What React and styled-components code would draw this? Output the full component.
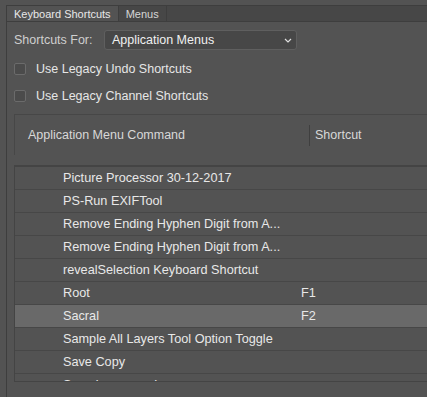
import React from "react";
import styled, { createGlobalStyle } from "styled-components";

const Global = createGlobalStyle`
  html, body { margin: 0; padding: 0; background: #535353; overflow: hidden; }
  body { font-family: "Liberation Sans", Arial, sans-serif; color: #e2e2e2; }
`;

const Page = styled.div`
  width: 427px;
  height: 397px;
  padding: 5px 0 0 6px;
  box-sizing: border-box;
  overflow: hidden;
`;

const Panel = styled.div`
  border-left: 1px solid #3e3e3e;
  border-top: 1px solid #3e3e3e;
  height: 392px;
  box-sizing: border-box;
  width: 440px;
`;

const TabBar = styled.div`
  display: flex;
  height: 15px;
  background: #474747;
  border-bottom: 1px solid #3e3e3e;
`;

const Tab = styled.div`
  display: flex;
  align-items: center;
  padding: 0 7px;
  font-size: 11px;
  color: ${(p) => (p.$active ? "#e8e8e8" : "#d6d6d6")};
  background: ${(p) => (p.$active ? "#535353" : "#474747")};
  border-right: 1px solid #3e3e3e;
`;

const Content = styled.div`
  padding: 8px 0 0 7px;
`;

const FieldRow = styled.div`
  display: flex;
  align-items: center;
  height: 20px;
`;

const Label = styled.span`
  font-size: 12.5px;
  color: #cfcfcf;
  width: 90px;
`;

const Select = styled.div`
  width: 193px;
  height: 20px;
  box-sizing: border-box;
  border: 1px solid #5f5f5f;
  border-radius: 3px;
  background: #474747;
  display: flex;
  align-items: center;
  justify-content: space-between;
  padding: 0 4px 0 7px;
  font-size: 12.5px;
  color: #f0f0f0;
`;

const CheckRow = styled.label`
  display: flex;
  align-items: center;
  gap: 10px;
  height: 12px;
  margin-top: ${(p) => p.$mt}px;
  font-size: 12.5px;
  color: #e6e6e6;
`;

const Box = styled.span`
  width: 12px;
  height: 12px;
  box-sizing: border-box;
  border: 1px solid #6b6b6b;
  border-radius: 2px;
  background: #4b4b4b;
`;

const Header = styled.div`
  margin-top: 12px;
  height: 40px;
  border-top: 1px solid #474747;
  border-left: 1px solid #474747;
  display: flex;
  align-items: center;
  font-size: 12.5px;
  color: #d8d8d8;
`;

const HeadCell = styled.div`
  width: ${(p) => p.$w}px;
  padding-left: ${(p) => p.$pl}px;
  box-sizing: border-box;
  height: 21px;
  display: flex;
  align-items: center;
  border-left: ${(p) => (p.$sep ? "1px solid #3f3f3f" : "none")};
`;

const List = styled.div`
  margin-top: 10px;
  height: 217px;
  box-sizing: border-box;
  border-top: 2px solid #444444;
  border-left: 1px solid #444444;
  border-bottom: 1px solid #444444;
  overflow: hidden;
`;

const Row = styled.div`
  display: flex;
  align-items: center;
  height: 22px;
  border-bottom: 1px solid #474747;
  background: ${(p) => (p.$sel ? "#696969" : "#535353")};
  font-size: 12.7px;
  color: #e8e8e8;
`;

const Cmd = styled.div`
  width: 286px;
  padding-left: 48px;
  box-sizing: border-box;
  white-space: nowrap;
  overflow: hidden;
`;

const Key = styled.div`
  padding-left: 0;
`;

const rows = [
  ["Picture Processor 30-12-2017", ""],
  ["PS-Run EXIFTool", ""],
  ["Remove Ending Hyphen Digit from A...", ""],
  ["Remove Ending Hyphen Digit from A...", ""],
  ["revealSelection Keyboard Shortcut", ""],
  ["Root", "F1"],
  ["Sacral", "F2", true],
  ["Sample All Layers Tool Option Toggle", ""],
  ["Save Copy", ""],
  ["Save Layers as Images...", ""],
];

export default function App() {
  return (
    <>
      <Global />
      <Page>
        <Panel>
          <TabBar>
            <Tab $active>Keyboard Shortcuts</Tab>
            <Tab>Menus</Tab>
          </TabBar>
          <Content>
            <FieldRow>
              <Label>Shortcuts For:</Label>
              <Select>
                <span>Application Menus</span>
                <svg width="8" height="5" viewBox="0 0 8 5">
                  <path d="M1 1 L4 4 L7 1" fill="none" stroke="#e0e0e0" strokeWidth="1.2" />
                </svg>
              </Select>
            </FieldRow>
            <CheckRow $mt={13}>
              <Box />
              Use Legacy Undo Shortcuts
            </CheckRow>
            <CheckRow $mt={15}>
              <Box />
              Use Legacy Channel Shortcuts
            </CheckRow>
            <Header>
              <HeadCell $w={294} $pl={13}>Application Menu Command</HeadCell>
              <HeadCell $w={120} $pl={5} $sep>Shortcut</HeadCell>
            </Header>
            <List>
              {rows.map(([c, k, sel], i) => (
                <Row key={i} $sel={sel}>
                  <Cmd>{c}</Cmd>
                  <Key>{k}</Key>
                </Row>
              ))}
            </List>
          </Content>
        </Panel>
      </Page>
    </>
  );
}
